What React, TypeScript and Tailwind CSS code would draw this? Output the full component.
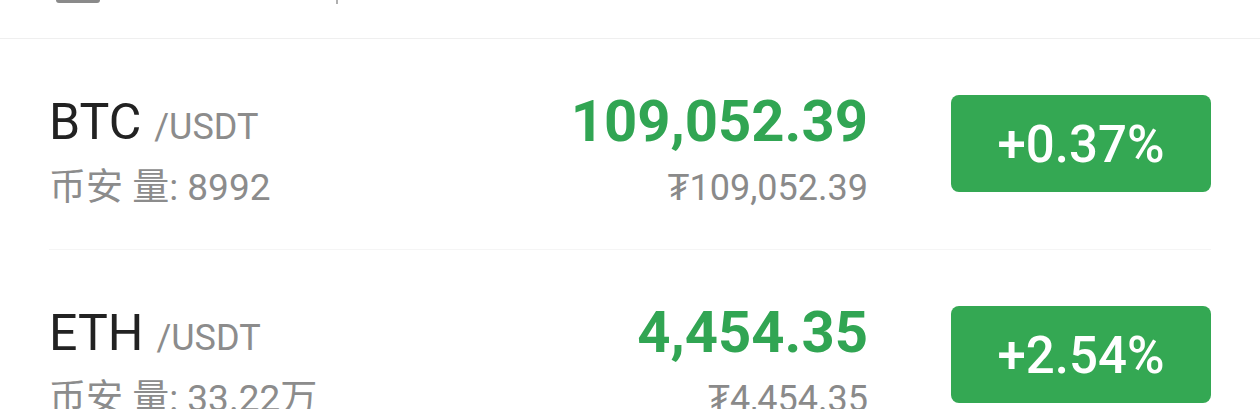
const rows = [
  { base: "BTC", quote: "/USDT", vol: "8992", price: "109,052.39", cny: "₮109,052.39", change: "+0.37%" },
  { base: "ETH", quote: "/USDT", vol: "33.22万", price: "4,454.35", cny: "₮4,454.35", change: "+2.54%" },
];

function MarketRow({ row }: { row: (typeof rows)[number] }) {
  return (
    <div className="flex h-[210px] items-start">
      <div className="flex-1 pt-[55px]">
        <div className="flex items-baseline leading-[56px]">
          <span className="text-[50px] text-[#222222]">{row.base}</span>
          <span className="ml-[13px] text-[36px] text-[#8c8c8c]">{row.quote}</span>
        </div>
        <div className="mt-[9px] text-[37px] leading-[48px] text-[#8c8c8c]">
          币安 量: {row.vol}
        </div>
      </div>
      <div className="flex flex-col items-end pt-[50px]">
        <div className="text-[58px] font-bold leading-[64px] text-[#31a553]">{row.price}</div>
        <div className="mt-[13px] text-[36px] leading-[44px] text-[#8a8a8a]">{row.cny}</div>
      </div>
      <div className="ml-[83px] mt-[56px] flex h-[97px] w-[260px] items-center justify-center rounded-[8px] bg-[#34a853] pt-[4px] text-[51px] font-medium text-white">
        {row.change}
      </div>
    </div>
  );
}

export default function App() {
  return (
    <div
      className="h-[409px] w-[1260px] overflow-hidden bg-white"
      style={{ fontFamily: "Roboto, 'Noto Sans CJK SC', sans-serif" }}
    >
      <div className="relative h-[39px] border-b border-[#efefef]">
        <div className="absolute left-[56px] top-0 h-[3px] w-[44px] rounded-b-sm bg-[#8a8a8a]" />
        <div className="absolute left-[336px] top-0 h-[4px] w-[2px] bg-[#b0b0b0]" />
      </div>
      <div className="pl-[49px] pr-[49px]">
        {rows.map((row, i) => (
          <div key={row.base} className={i === 0 ? "border-b border-[#f5f5f5]" : ""}>
            <MarketRow row={row} />
          </div>
        ))}
      </div>
    </div>
  );
}
